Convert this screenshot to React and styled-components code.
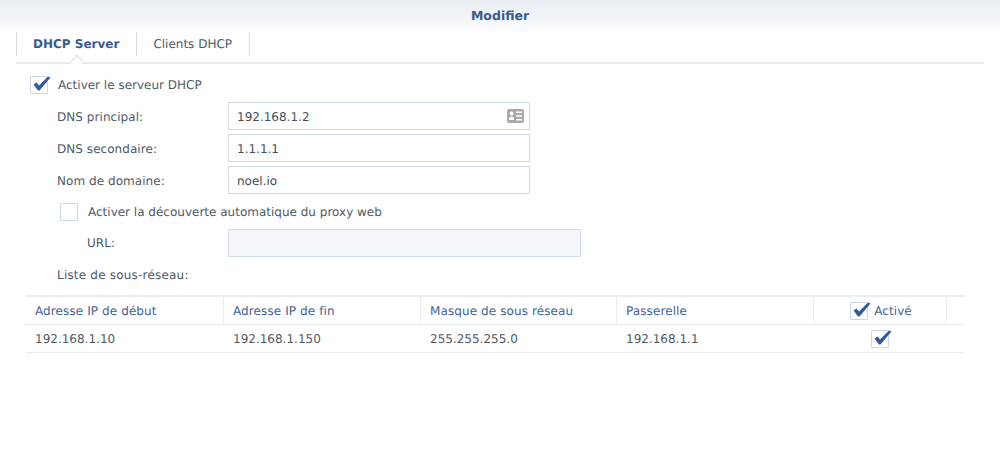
import styled, { createGlobalStyle } from 'styled-components'

const GlobalStyle = createGlobalStyle`
    html, body {
        margin: 0;
        padding: 0;
        background: #fff;
    }
    body {
        font-family: "DejaVu Sans", Verdana, sans-serif;
        font-size: 12px;
        color: #4f5a65;
        text-rendering: geometricPrecision;
    }
`

const Page = styled.div`
    width: 1000px;
    height: 462px;
    overflow: hidden;
    background: #fff;
`

const Header = styled.div`
    height: 32px;
    line-height: 32px;
    text-align: center;
    font-size: 12.5px;
    font-weight: 700;
    color: #3a5a8c;
    background: linear-gradient(#e8ecf1, #fbfcfd);
`

const TabBar = styled.div`
    display: flex;
    height: 30px;
    margin: 0 16px;
    border-bottom: 2px solid #e6eaef;
`

const Tab = styled.div`
    position: relative;
    height: 24px;
    line-height: 24px;
    padding: 0 17px 0 16px;
    border-right: 1px solid #d7dfe8;
    font-weight: ${p => p.$active ? 700 : 400};
    color: ${p => p.$active ? '#3a5a8c' : '#4f5a65'};

    &:first-child {
        border-left: 1px solid #d7dfe8;
    }

    ${p => p.$active && `
        &::after {
            content: '';
            position: absolute;
            left: 54px;
            top: 23px;
            width: 10px;
            height: 10px;
            background: #fff;
            border-left: 2px solid #e6eaef;
            border-top: 2px solid #e6eaef;
            transform: rotate(45deg) scale(.8);
        }
    `}
`

const Form = styled.div`
    display: flex;
    flex-direction: column;
    padding: 12px 0 0 30px;
`

const CheckRow = styled.div`
    display: flex;
    align-items: center;
    gap: 10px;
    height: 18px;
    margin-left: ${p => p.$indent || 0}px;
    margin-top: ${p => p.$top || 0}px;
`

const Box = styled.span`
    position: relative;
    display: inline-block;
    flex: none;
    box-sizing: border-box;
    width: 18px;
    height: 18px;
    background: #fff;
    border: 1px solid #ccd6e0;
    border-radius: 1px;

    svg {
        position: absolute;
        left: -1px;
        top: -3px;
    }
`

const FieldRow = styled.div`
    display: flex;
    align-items: center;
    height: 28px;
    margin-top: ${p => p.$top || 4}px;
    padding-left: ${p => p.$indent || 27}px;
`

const Label = styled.div`
    width: ${p => p.$width || 171}px;
    flex: none;
    padding-top: ${p => p.$width ? 0 : 2}px;
    letter-spacing: .05px;
`

const Input = styled.div`
    position: relative;
    box-sizing: border-box;
    width: ${p => p.$width || 302}px;
    height: 28px;
    line-height: 26px;
    padding: 1px 0 0 8px;
    border: 1px solid #d3dde8;
    background: ${p => p.$disabled ? '#f4f6f9' : '#fff'};
    color: #46505a;

    svg {
        position: absolute;
        right: 5px;
        top: 6px;
    }
`

const SubLabel = styled.div`
    height: 18px;
    line-height: 18px;
    margin: 9px 0 0 27px;
    letter-spacing: .2px;
`

const Table = styled.div`
    margin: 11px 36px 0 26px;
    width: 938px;
    border-top: 2px solid #eaeef3;
`

const Row = styled.div`
    display: grid;
    grid-template-columns: 198px 197px 196px 197px 133px 17px;
    height: 27px;
    border-bottom: 1px solid #e6ebf0;
`

const Cell = styled.div`
    display: flex;
    align-items: center;
    justify-content: ${p => p.$center ? 'center' : 'flex-start'};
    gap: 6px;
    padding-left: ${p => p.$center ? (p.$head ? 2 : 0) : 9}px;
    padding-right: ${p => p.$center && !p.$head ? 1 : 0}px;
    color: ${p => p.$head ? '#3f6396' : '#4f5a65'};
    letter-spacing: ${p => p.$head ? '.1px' : '0'};
    border-right: ${p => p.$head ? '1px solid #e9edf2' : '0'};

    &:last-child {
        border-right: 0;
    }
`

const Check = () => (
    <svg width="22" height="19" viewBox="0 0 22 19">
        <path d="M3.5 10.5 L6.5 8.6 L9 11.6 L18 2.5 L20.5 3.5 L9.5 16.5 L8 16.5 Z" fill="#2f5b9b" />
    </svg>
)

const CheckBox = ({ checked }) => <Box>{checked && <Check />}</Box>

const CardIcon = () => (
    <svg width="17" height="14" viewBox="0 0 17 14">
        <rect x="0" y="0" width="17" height="14" rx="2" fill="#a9a9a9" />
        <circle cx="4.6" cy="4.6" r="2" fill="#fff" />
        <path d="M2 11 C2 8 3 7.4 4.6 7.4 C6.2 7.4 7.2 8 7.2 11 Z" fill="#fff" />
        <path d="M9 3.2 H15 M9 7 H15 M9 10.8 H15" stroke="#fff" strokeWidth="1.5" />
    </svg>
)

const App = () => {
    return <Page>
        <GlobalStyle />
        <Header>Modifier</Header>
        <TabBar>
            <Tab $active>DHCP Server</Tab>
            <Tab>Clients DHCP</Tab>
        </TabBar>
        <Form>
            <CheckRow>
                <CheckBox checked />
                <span>Activer le serveur DHCP</span>
            </CheckRow>
            <FieldRow $top={8}>
                <Label>DNS principal:</Label>
                <Input>192.168.1.2<CardIcon /></Input>
            </FieldRow>
            <FieldRow>
                <Label>DNS secondaire:</Label>
                <Input>1.1.1.1</Input>
            </FieldRow>
            <FieldRow>
                <Label>Nom de domaine:</Label>
                <Input>noel.io</Input>
            </FieldRow>
            <CheckRow $indent={30} $top={9}>
                <CheckBox />
                <span>Activer la découverte automatique du proxy web</span>
            </CheckRow>
            <FieldRow $top={8} $indent={57}>
                <Label $width={141}>URL:</Label>
                <Input $width={353} $disabled />
            </FieldRow>
            <SubLabel>Liste de sous-réseau:</SubLabel>
        </Form>
        <Table>
            <Row>
                <Cell $head>Adresse IP de début</Cell>
                <Cell $head>Adresse IP de fin</Cell>
                <Cell $head>Masque de sous réseau</Cell>
                <Cell $head>Passerelle</Cell>
                <Cell $head $center><CheckBox checked />Activé</Cell>
                <Cell $head />
            </Row>
            <Row>
                <Cell>192.168.1.10</Cell>
                <Cell>192.168.1.150</Cell>
                <Cell>255.255.255.0</Cell>
                <Cell>192.168.1.1</Cell>
                <Cell $center><CheckBox checked /></Cell>
                <Cell />
            </Row>
        </Table>
    </Page>
}

export default App
